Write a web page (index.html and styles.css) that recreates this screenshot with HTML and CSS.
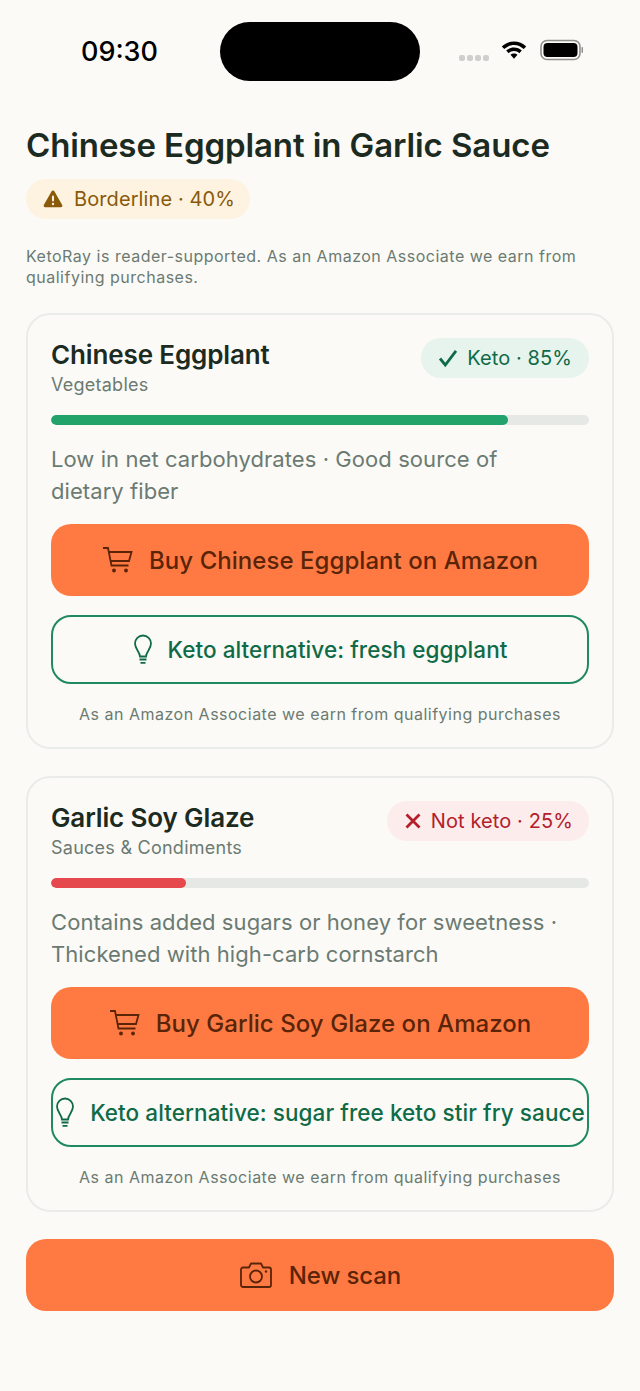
FILE: index.html
```html
<!DOCTYPE html>
<html lang="en">
<head>
<meta charset="utf-8">
<title>KetoRay</title>
<link rel="stylesheet" href="styles.css">
</head>
<body>
<div class="status">
  <div class="time">09:30</div>
  <div class="island"></div>
  <div class="sys">
    <div class="dots"><i></i><i></i><i></i><i></i></div>
    <svg class="wifi" width="26" height="20" viewBox="0 0 26 20"><path d="M13 1.500C8.300 1.500 4.200 3.300 .8 6.400L3.300 9.100C6 6.600 9.300 5 13 5S20 6.600 22.700 9.100L25.200 6.400C21.800 3.300 17.700 1.500 13 1.500ZM13 7.500C10 7.500 7.300 8.600 5.200 10.600L7.700 13.200C9.100 11.900 10.900 11 13 11S16.900 11.900 18.300 13.200L20.800 10.600C18.700 8.600 16 7.500 13 7.500ZM13 13.400C11.600 13.400 10.400 13.900 9.500 14.800L13 18.800 16.500 14.800C15.600 13.900 14.400 13.400 13 13.400Z" fill="#000"/></svg>
    <svg class="batt" width="44" height="22" viewBox="0 0 44 22"><rect x="1" y="1.500" width="39" height="19" rx="6" fill="none" stroke="#8f8f8f" stroke-width="1.600"/><rect x="3.500" y="4" width="34" height="14" rx="4" fill="#000"/><rect x="41.500" y="8" width="1.500" height="6" rx=".7" fill="#8f8f8f"/></svg>
  </div>
</div>
<main class="page">
  <h1 class="title">Chinese Eggplant in Garlic Sauce</h1>
  <div class="pill pill-warn pill-head">
    <svg width="22" height="22" viewBox="0 0 22 22"><path d="M11 2.500C10.300 2.500 9.800 2.900 9.500 3.400L1.800 17C1.200 18.100 2 19.300 3.200 19.300H18.800C20 19.300 20.800 18.100 20.200 17L12.500 3.400C12.200 2.900 11.700 2.500 11 2.500Z" fill="#8a5a0a"/><rect x="10" y="7.500" width="2" height="6" rx="1" fill="#fdf3e0"/><circle cx="11" cy="16" r="1.200" fill="#fdf3e0"/></svg>
    <span>Borderline · 40%</span>
  </div>
  <p class="disclosure">KetoRay is reader-supported. As an Amazon Associate we earn from qualifying purchases.</p>

  <section class="card">
    <div class="card-head">
      <div>
        <h2 class="name">Chinese Eggplant</h2>
        <div class="cat">Vegetables</div>
      </div>
      <div class="pill pill-ok">
        <svg width="22" height="22" viewBox="0 0 22 22"><path d="M3 11.500L8.300 18L19 3.800" fill="none" stroke="#0f6b47" stroke-width="2.800"/></svg>
        <span>Keto · 85%</span>
      </div>
    </div>
    <div class="track"><div class="fill fill-ok" style="width:85%"></div></div>
    <p class="reason">Low in net carbohydrates · Good source of dietary fiber</p>
    <a class="btn btn-buy">
      <svg class="cart" width="32" height="28" viewBox="0 0 32 28"><path d="M1 2H6L9.500 19.500H26.500M7 6H29.500L27 15H8.800" fill="none" stroke="#5a2408" stroke-width="1.800"/><circle cx="12" cy="24.500" r="1.900" fill="#5a2408"/><circle cx="24" cy="24.500" r="1.900" fill="#5a2408"/></svg>
      <span>Buy Chinese Eggplant on Amazon</span>
    </a>
    <a class="btn btn-alt">
      <svg class="bulb" width="20" height="32" viewBox="0 0 20 32"><path d="M7 22.500C7 18 2 15 2 9.500A8 8 0 0 1 18 9.500C18 15 13 18 13 22.500ZM6.500 25.500H13.500M7.500 28.800H12.500" fill="none" stroke="#0f6b47" stroke-width="1.800"/></svg>
      <span>Keto alternative: fresh eggplant</span>
    </a>
    <p class="note">As an Amazon Associate we earn from qualifying purchases</p>
  </section>

  <section class="card">
    <div class="card-head">
      <div>
        <h2 class="name">Garlic Soy Glaze</h2>
        <div class="cat">Sauces &amp; Condiments</div>
      </div>
      <div class="pill pill-bad">
        <svg width="20" height="20" viewBox="0 0 20 20"><path d="M3.500 3.500L16.500 16.500M16.500 3.500L3.500 16.500" fill="none" stroke="#b3202a" stroke-width="2.800"/></svg>
        <span>Not keto · 25%</span>
      </div>
    </div>
    <div class="track"><div class="fill fill-bad" style="width:25%"></div></div>
    <p class="reason">Contains added sugars or honey for sweetness · Thickened with high-carb cornstarch</p>
    <a class="btn btn-buy">
      <svg class="cart" width="32" height="28" viewBox="0 0 32 28"><path d="M1 2H6L9.500 19.500H26.500M7 6H29.500L27 15H8.800" fill="none" stroke="#5a2408" stroke-width="1.800"/><circle cx="12" cy="24.500" r="1.900" fill="#5a2408"/><circle cx="24" cy="24.500" r="1.900" fill="#5a2408"/></svg>
      <span>Buy Garlic Soy Glaze on Amazon</span>
    </a>
    <a class="btn btn-alt">
      <svg class="bulb" width="20" height="32" viewBox="0 0 20 32"><path d="M7 22.500C7 18 2 15 2 9.500A8 8 0 0 1 18 9.500C18 15 13 18 13 22.500ZM6.500 25.500H13.500M7.500 28.800H12.500" fill="none" stroke="#0f6b47" stroke-width="1.800"/></svg>
      <span>Keto alternative: sugar free keto stir fry sauce</span>
    </a>
    <p class="note">As an Amazon Associate we earn from qualifying purchases</p>
  </section>

  <a class="btn btn-buy btn-scan">
    <svg width="34" height="28" viewBox="0 0 34 28"><path d="M4 6.500H10L12 2.500H22L24 6.500H30A2 2 0 0 1 32 8.500V24A2 2 0 0 1 30 26H4A2 2 0 0 1 2 24V8.500A2 2 0 0 1 4 6.500Z" fill="none" stroke="#5a2408" stroke-width="1.800" stroke-linejoin="round"/><circle cx="17" cy="15.500" r="6" fill="none" stroke="#5a2408" stroke-width="1.800"/><circle cx="27" cy="10.500" r="1.200" fill="#5a2408"/></svg>
    <span>New scan</span>
  </a>
</main>
</body>
</html>
```

FILE: styles.css
```css
* { box-sizing: border-box; }
html, body { margin: 0; padding: 0; }
body {
  width: 640px;
  min-height: 1391px;
  background: #fbfaf6;
  font-family: Inter, "Noto Sans", sans-serif;
  color: #1c2b22;
}
.status {
  height: 102px;
  padding: 22px 0 0 81px;
  display: flex;
  align-items: flex-start;
}
.time {
  width: 75px;
  margin-top: 14px;
  font-size: 27px;
  line-height: 32px;
  font-weight: 500;
  color: #000;
  white-space: nowrap;
}
.island {
  width: 200px;
  height: 59px;
  margin-left: 64px;
  border-radius: 30px;
  background: #000;
}
.sys { display: flex; align-items: center; height: 59px; margin-left: 39px; margin-top: -1px; }
.dots { display: flex; gap: 2px; margin-top: 14px; margin-right: 12px; }
.dots i { display: block; width: 6px; height: 6px; border-radius: 2px; background: #cfcfcd; }
.wifi { margin-right: 13px; margin-top: -2px; }
.batt { margin-top: -1px; }
.page { padding: 0 26px; display: flex; flex-direction: column; align-items: stretch; }
.title {
  margin: 23px 0 14px;
  font-size: 33px;
  line-height: 40px;
  font-weight: 600;
  letter-spacing: -0.1px;
  color: #1c2b22;
}
.pill {
  display: inline-flex;
  align-items: center;
  gap: 8px;
  height: 40px;
  padding: 0 17px 0 16px;
  border-radius: 20px;
  font-size: 20px;
  font-weight: 400;
  letter-spacing: 0.1px;
  white-space: nowrap;
}
.pill-head { align-self: flex-start; }
.pill-warn { background: #fdf3e0; color: #8a5a0a; gap: 10px; padding-right: 15px; }
.pill-ok { background: #e7f4ed; color: #0f6b47; }
.pill-bad { background: #fdecec; color: #b3202a; padding-right: 16px; }
.disclosure {
  margin: 27px 0 25px;
  font-size: 16px;
  line-height: 21px;
  letter-spacing: 0.5px;
  color: #6b7a72;
}
.card {
  border: 2px solid #eaecea;
  border-radius: 24px;
  padding: 23px 23px 0;
  height: 436px;
  margin-bottom: 27px;
}
.card-head { display: flex; justify-content: space-between; align-items: flex-start; }
.name { margin: 0; font-size: 26px; line-height: 34px; font-weight: 600; letter-spacing: -0.13px; color: #1c2b22; }
.cat { font-size: 18px; line-height: 22px; letter-spacing: 0.25px; color: #6b7a72; margin-top: 2px; }
.track { height: 10px; border-radius: 5px; background: #e6e8e6; margin-top: 19px; overflow: hidden; }
.fill { height: 100%; border-radius: 5px; }
.fill-ok { background: #22a36b; }
.fill-bad { background: #e5484d; }
.reason { margin: 18px 0 17px; max-width: 515px; font-size: 22px; line-height: 32px; letter-spacing: 0.07px; color: #6b7a72; }
.btn {
  display: flex;
  align-items: center;
  justify-content: center;
  gap: 15px;
  border-radius: 20px;
  font-size: 24px;
  font-weight: 500;
  letter-spacing: 0.05px;
  white-space: nowrap;
}
.btn-buy { height: 72px; background: #ff7a42; color: #5a2408; }
.btn-alt {
  height: 69px;
  margin-top: 19px;
  border: 2px solid #1f8a5f;
  color: #0f6b47;
  font-size: 22.5px;
  letter-spacing: 0.07px;
  padding: 0 2px;
}
.bulb, .cart { flex: none; }
.note { margin: 19px 0 0; text-align: center; font-size: 16px; line-height: 22px; letter-spacing: 0.5px; color: #6b7a72; }
.btn-scan { gap: 16px; margin-bottom: 80px; letter-spacing: -0.1px; }
```
